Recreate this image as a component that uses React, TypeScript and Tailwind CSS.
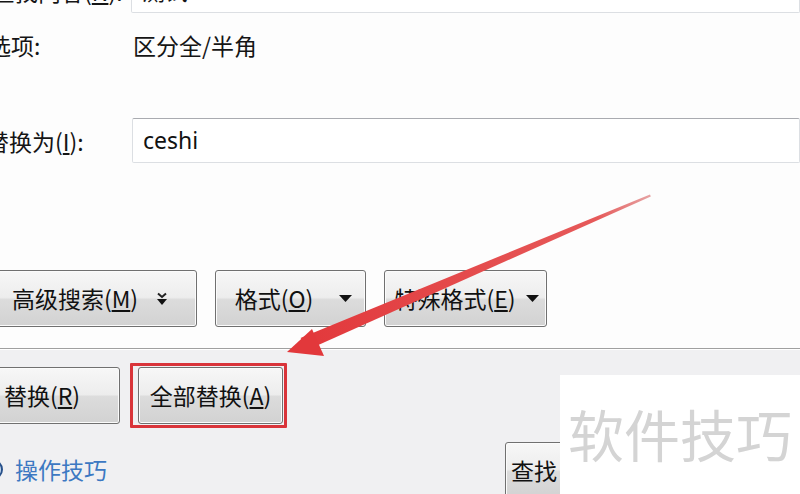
import React from "react"

const font = { fontFamily: '"Noto Sans CJK SC", "Noto Sans", sans-serif' }

const btn =
  "flex h-[57px] shrink-0 items-center justify-center rounded-[3px] border border-[#707070] bg-[linear-gradient(#f7f7f7,#ededed_48%,#dcdcdc_52%,#d2d2d2)] text-[23px] text-[#111] shadow-[inset_0_0_0_1px_#fbfbfb]"

function Caret() {
  return (
    <svg width="13" height="7" viewBox="0 0 13 7" className="shrink-0">
      <path d="M0 0h13L6.5 7z" fill="#111" />
    </svg>
  )
}

function MoreIcon() {
  return (
    <svg width="12" height="14" viewBox="0 0 12 14" className="shrink-0">
      <path d="M2 1.5l4 3.5 4-3.5" fill="none" stroke="#222" strokeWidth="2" />
      <path d="M1 7h10L6 13z" fill="#111" />
    </svg>
  )
}

function Arrow() {
  return (
    <svg
      className="pointer-events-none absolute left-0 top-0"
      width="800"
      height="494"
      viewBox="0 0 800 494"
    >
      <defs>
        <linearGradient id="shaft" x1="650" y1="195" x2="300" y2="345" gradientUnits="userSpaceOnUse">
          <stop offset="0" stopColor="#e6a3a3" />
          <stop offset="0.15" stopColor="#e65a5a" />
          <stop offset="1" stopColor="#e2383b" />
        </linearGradient>
      </defs>
      <polygon points="650,194.5 650.8,196.4 310.5,348.5 300.5,338" fill="url(#shaft)" />
      <polygon points="287,352 312,329 324,356" fill="#e2383b" />
    </svg>
  )
}

export default function App() {
  return (
    <div style={font} className="relative h-[494px] w-[800px] overflow-hidden bg-[#fdfdfd] text-[#151515]">
      {/* upper part of dialog */}
      <div className="-mt-[32px] bg-[#fdfdfd] pb-[21px]">
        <div className="-ml-[8px] flex h-[45px] items-center">
          <div className="w-[139px] shrink-0 text-[23px] leading-6">
            查找内容(<u>N</u>):
          </div>
          <div className="flex h-[45px] w-[700px] items-center rounded-[2px] border border-[#dcdfe3] border-t-[#b4b6ba] bg-white pl-[10px] text-[23px]">
            测试
          </div>
        </div>

        <div className="-ml-[12px] mt-[20px] flex h-[24px] items-center">
          <div className="w-[145px] shrink-0 text-[23px] leading-6">选项:</div>
          <div className="text-[23px] leading-6">区分全/半角</div>
        </div>

        <div className="-ml-[14px] mt-[61px] flex h-[45px] items-center">
          <div className="w-[146px] shrink-0 text-[23px] leading-6">
            替换为(<u>I</u>):
          </div>
          <div
            style={{ fontFamily: '"Noto Sans", sans-serif' }}
            className="flex h-[45px] w-[700px] items-center rounded-[2px] border border-[#dcdfe3] border-t-[#a9abb0] bg-white pl-[10px] text-[23px] text-[#111]"
          >
            ceshi
          </div>
        </div>

        <div className="-ml-[27px] mt-[107px] flex gap-[18px]">
          <button className={`${btn} w-[224px] gap-[18px] pl-[10px]`}>
            <span>
              高级搜索(<u>M</u>)
            </span>
            <MoreIcon />
          </button>
          <button className={`${btn} w-[151px] gap-[26px] pl-[6px]`}>
            <span>
              格式(<u>O</u>)
            </span>
            <Caret />
          </button>
          <button className={`${btn} w-[163px] gap-[10px] pl-[2px]`}>
            <span>
              特殊格式(<u>E</u>)
            </span>
            <Caret />
          </button>
        </div>
      </div>

      {/* lower part */}
      <div className="h-[200px] border-t border-[#a0a0a0] bg-[#f0f0f2] pt-[18px] shadow-[inset_0_1px_0_#ffffff]">
        <div className="-ml-[40px] flex gap-[18px]">
          <button className={`${btn} w-[160px] pl-[4px]`}>
            替换(<u>R</u>)
          </button>
          <div className="relative">
            <button className={`${btn} w-[145px]`}>
              全部替换(<u>A</u>)
            </button>
            <span className="pointer-events-none absolute -bottom-[4px] -left-[8px] -right-[4px] -top-[4px] rounded-[1px] border-[3px] border-[#d9343a]" />
          </div>
        </div>

        <div className="-ml-[18px] mt-[18px] flex items-start">
          <div className="mt-[15px] flex w-[523px] items-center gap-[12px]">
            <span className="h-[21px] w-[21px] shrink-0 rounded-full border-2 border-[#27508a] bg-[#c9dcf3]" />
            <span className="text-[23px] leading-6 text-[#3c78c2]">操作技巧</span>
          </div>
          <button className={`${btn} w-[150px] justify-start pl-[5px]`}>查找</button>
        </div>
      </div>

      <Arrow />

      {/* watermark */}
      <div className="absolute left-[560px] top-[375px] h-[119px] w-[240px] bg-white pl-[8px] pt-[30px]">
        <div className="text-[56px] leading-[56px] text-[#d4d4d4]">软件技巧</div>
      </div>
    </div>
  )
}
